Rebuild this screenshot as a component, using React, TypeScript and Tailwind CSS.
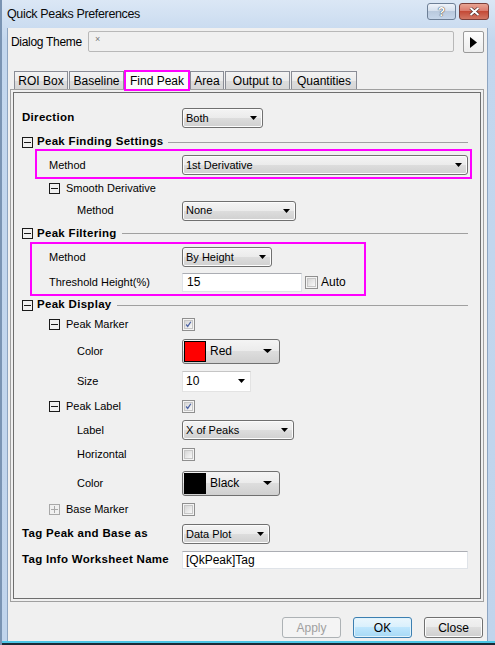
import React from 'react';

// Win7-style "Quick Peaks Preferences" dialog

const ui = "font-['Liberation_Sans',Arial,sans-serif]";

const DownArrow = ({ w = 7 }: { w?: number }) => (
  <svg width={w} height={4} viewBox={`0 0 ${w} 4`} className="shrink-0">
    <polygon points={`0,0 ${w},0 ${w / 2},4`} fill="#000" />
  </svg>
);

const Combo = ({ text, className }: { text: string; className: string }) => (
  <div
    className={`flex items-center justify-between h-[20px] pl-[3px] pr-[5px] border border-[#707070] rounded-[3px] bg-[linear-gradient(#f4f4f4,#ebebeb_50%,#dddddd_50%,#d0d0d0)] shadow-[inset_0_0_0_1px_#fcfcfc] text-[11px] ${className}`}
  >
    <span>{text}</span>
    <DownArrow />
  </div>
);

const ColorCombo = ({ text, swatch }: { text: string; swatch: string }) => (
  <div className="flex items-center w-[98px] h-[25px] p-px border border-[#707070] rounded-[3px] bg-[linear-gradient(#f4f4f4,#ebebeb_50%,#dddddd_50%,#d0d0d0)] text-[12px]">
    <div className={`w-[22px] h-full border border-black ${swatch}`} />
    <span className="ml-[4px] flex-1">{text}</span>
    <div className="mr-[6px]">
      <DownArrow w={9} />
    </div>
  </div>
);

const Check = ({ on }: { on?: boolean }) => (
  <div className="w-[13px] h-[13px] border border-[#8f8f8f] bg-[#f4f4f4] p-px">
    <div className="w-full h-full border border-[#c6c6c6] bg-[linear-gradient(135deg,#d6d6d6,#f8f8f8)] flex items-center justify-center">
      {on && (
        <svg width="9" height="9" viewBox="0 0 9 9">
          <path d="M1.5 4.5 L3.5 7 L7.5 1" stroke="#4c63a3" strokeWidth="1.6" fill="none" />
        </svg>
      )}
    </div>
  </div>
);

const Toggle = ({ plus, dim }: { plus?: boolean; dim?: boolean }) => (
  <div
    className={`relative w-[11px] h-[11px] border shrink-0 ${dim ? 'border-[#a8a8a8]' : 'border-[#1a1a1a]'}`}
  >
    <div className={`absolute left-[1px] top-[4px] w-[7px] h-px ${dim ? 'bg-[#a8a8a8]' : 'bg-[#1a1a1a]'}`} />
    {plus && <div className={`absolute left-[4px] top-[1px] w-px h-[7px] ${dim ? 'bg-[#a8a8a8]' : 'bg-[#1a1a1a]'}`} />}
  </div>
);

const Header = ({ text, className }: { text: string; className: string }) => (
  <div className={`flex items-center pl-[8px] pr-[12px] ${className}`}>
    <Toggle />
    <span className="ml-[4px] font-bold text-[11.5px] tracking-[0.3px]">{text}</span>
    <div className="flex-1 ml-[5px] h-px bg-[#a0a0a0]" />
  </div>
);

const Label = ({ level, bold, children }: { level: 0 | 1 | 2; bold?: boolean; children: React.ReactNode }) => {
  const pad = level === 0 ? 'pl-[8px]' : level === 1 ? 'pl-[35px]' : 'pl-[63px]';
  return (
    <div className={`w-[168px] shrink-0 ${pad} ${bold ? 'font-bold text-[11.5px] tracking-[0.3px]' : 'text-[11px]'}`}>
      {children}
    </div>
  );
};

const SubToggle = ({ text, plus, dim }: { text: string; plus?: boolean; dim?: boolean }) => (
  <div className="w-[168px] shrink-0 pl-[35px] flex items-center">
    <Toggle plus={plus} dim={dim} />
    <span className="ml-[6px] text-[11px]">{text}</span>
  </div>
);

const Tab = ({ text, className }: { text: string; className: string }) => (
  <div
    className={`flex items-center justify-center h-[18px] border border-b-0 border-[#898c95] bg-[linear-gradient(#f3f3f3,#ebebeb_50%,#dddddd_50%,#d6d6d6)] text-[12px] ${className}`}
  >
    {text}
  </div>
);

const DlgButton = ({ text, kind }: { text: string; kind: 'off' | 'focus' | 'normal' }) => {
  const look =
    kind === 'off'
      ? 'border-[#adb2b5] bg-[#f4f4f4] text-[#a0a0a0]'
      : kind === 'focus'
        ? 'border-[#3c7fb1] bg-[linear-gradient(#eaf6fd,#d9f0fc_50%,#bee6fd_50%,#a7d9f5)] shadow-[inset_0_0_0_1px_#e1f3fc]'
        : 'border-[#707070] bg-[linear-gradient(#f2f2f2,#ebebeb_50%,#dddddd_50%,#cfcfcf)] shadow-[inset_0_0_0_1px_#fcfcfc]';
  return (
    <div className={`w-[59px] h-[21px] flex items-center justify-center border rounded-[3px] text-[12px] ${look}`}>
      {text}
    </div>
  );
};

export default function App() {
  return (
    <div className={`w-[495px] h-[645px] flex flex-col bg-[linear-gradient(#dbe7f5,#c3d7ee_40px,#c0d4ec)] border-l-2 border-[#7a94b3] text-black ${ui}`}>
      {/* title bar */}
      <div className="h-[28px] shrink-0 flex items-start">
        <div className="ml-[5px] mt-[5px] text-[12.5px] tracking-[-0.35px] text-[#0a0a0a]">Quick Peaks Preferences</div>
        <div className="ml-auto mt-[3px] flex gap-[3px] mr-[6px]">
          <div className="w-[29px] h-[17px] rounded-[3px] border border-[#6d7f96] bg-[linear-gradient(#eef3fa,#d3deec_50%,#b9c9dd_50%,#c6d6ea)] flex items-center justify-center text-[12px] font-bold text-white [text-shadow:0_0_1px_#333,0_0_1px_#333]">
            ?
          </div>
          <div className="w-[30px] h-[17px] rounded-[3px] border border-[#7b3f3a] bg-[linear-gradient(#e8a493,#d9776a_50%,#c44a37_50%,#d27764)] flex items-center justify-center">
            <svg width="11" height="9" viewBox="0 0 11 9">
              <path d="M1.5 1 L9.5 8 M9.5 1 L1.5 8" stroke="#4a2a28" strokeWidth="3.2" />
              <path d="M1.5 1 L9.5 8 M9.5 1 L1.5 8" stroke="#fff" strokeWidth="2" />
            </svg>
          </div>
        </div>
      </div>

      {/* client area */}
      <div className="ml-[5px] w-[481px] h-[613px] flex flex-col bg-[#f0f0f0] border-l border-r border-[#8ea5c1]">
        <div className="mt-[3px] h-[21px] flex items-start">
          <div className="w-[80px] pl-[3px] pt-[2px] text-[12px] tracking-[-0.3px]">Dialog Theme</div>
          <div className="w-[366px] h-[21px] border border-[#b8b8b8] rounded-[2px] bg-[#f0f0f0] pl-[6px] pt-[1px] text-[9px] text-[#777]">
            ×
          </div>
          <div className="ml-[9px] w-[21px] h-[22px] border border-[#9a9a9a] rounded-[2px] bg-[linear-gradient(#fdfdfd,#ececec)] flex items-center justify-center">
            <svg width="7" height="11" viewBox="0 0 7 11">
              <polygon points="0,0 7,5.5 0,11" fill="#000" />
            </svg>
          </div>
        </div>

        {/* tabs */}
        <div className="mt-[18px] ml-[6px] h-[19px] flex items-end relative z-10">
          <Tab text="ROI Box" className="w-[54px]" />
          <Tab text="Baseline" className="w-[55px] ml-px" />
          <div className="w-[66px] h-[21px] -mb-[2px] border-2 border-[#ff00ff] bg-[#fbfbfb] flex items-center justify-center text-[12px]">
            Find Peak
          </div>
          <Tab text="Area" className="w-[34px]" />
          <Tab text="Output to" className="w-[65px] ml-px" />
          <Tab text="Quantities" className="w-[66px] ml-px" />
        </div>

        {/* tab panel */}
        <div className="ml-[2px] w-[474px] h-[513px] border border-[#a0a0a0] p-[2px]">
          <div className="h-full border border-[#6e6e6e] pt-[13px]">
            <div className="h-[24px] flex items-center">
              <Label level={0} bold>Direction</Label>
              <Combo text="Both" className="w-[81px]" />
            </div>

            <Header text="Peak Finding Settings" className="h-[24px]" />

            <div className="h-[22px] flex items-center relative">
              <Label level={1}>Method</Label>
              <Combo text="1st Derivative" className="w-[286px]" />
              <div className="absolute left-[21px] top-[-5px] w-[437px] h-[30px] border-2 border-[#ff00ff]" />
            </div>

            <div className="h-[24px] flex items-center">
              <SubToggle text="Smooth Derivative" />
            </div>

            <div className="h-[21px] flex items-center">
              <Label level={2}>Method</Label>
              <Combo text="None" className="w-[114px]" />
            </div>

            <Header text="Peak Filtering" className="h-[25px]" />

            <div className="relative">
              <div className="h-[22px] flex items-center">
                <Label level={1}>Method</Label>
                <Combo text="By Height" className="w-[90px]" />
              </div>
              <div className="h-[28px] flex items-center">
                <Label level={1}>Threshold Height(%)</Label>
                <div className="w-[120px] h-[19px] border border-[#dfe3e8] border-t-[#abadb3] bg-white pl-[4px] text-[12px] flex items-center">
                  15
                </div>
                <div className="ml-[3px]">
                  <Check />
                </div>
                <span className="ml-[3px] text-[12px]">Auto</span>
              </div>
              <div className="absolute left-[16px] top-[-4px] w-[336px] h-[54px] border-2 border-[#ff00ff]" />
            </div>

            <Header text="Peak Display" className="h-[18px]" />

            <div className="h-[20px] flex items-center">
              <SubToggle text="Peak Marker" />
              <Check on />
            </div>

            <div className="h-[34px] flex items-center">
              <Label level={2}>Color</Label>
              <ColorCombo text="Red" swatch="bg-[#ff0000]" />
            </div>

            <div className="h-[26px] flex items-center">
              <Label level={2}>Size</Label>
              <div className="w-[69px] h-[21px] flex items-center justify-between pl-[3px] pr-[5px] border border-[#e3e3e3] border-t-[#c5c5c5] bg-white text-[12px]">
                <span>10</span>
                <DownArrow />
              </div>
            </div>

            <div className="h-[24px] flex items-center">
              <SubToggle text="Peak Label" />
              <Check on />
            </div>

            <div className="h-[24px] flex items-center">
              <Label level={2}>Label</Label>
              <Combo text="X of Peaks" className="w-[112px]" />
            </div>

            <div className="h-[24px] flex items-center">
              <Label level={2}>Horizontal</Label>
              <Check />
            </div>

            <div className="h-[34px] flex items-center">
              <Label level={2}>Color</Label>
              <ColorCombo text="Black" swatch="bg-black" />
            </div>

            <div className="h-[18px] flex items-center">
              <SubToggle text="Base Marker" plus dim />
              <Check />
            </div>

            <div className="h-[32px] flex items-center">
              <Label level={0} bold>Tag Peak and Base as</Label>
              <Combo text="Data Plot" className="w-[88px]" />
            </div>

            <div className="h-[19px] flex items-center">
              <Label level={0} bold>Tag Info Worksheet Name</Label>
              <div className="w-[286px] h-[18px] border border-[#dfe3e8] border-t-[#abadb3] bg-white pl-[3px] text-[12px] flex items-center">
                [QkPeak]Tag
              </div>
            </div>
          </div>
        </div>

        {/* dialog buttons */}
        <div className="mt-[15px] mr-[4px] flex justify-end gap-[12px]">
          <DlgButton text="Apply" kind="off" />
          <DlgButton text="OK" kind="focus" />
          <DlgButton text="Close" kind="normal" />
        </div>
      </div>
      <div className="flex-1 border-t-2 border-[#4cc6e6] bg-[#1b2a36]" />
    </div>
  );
}
